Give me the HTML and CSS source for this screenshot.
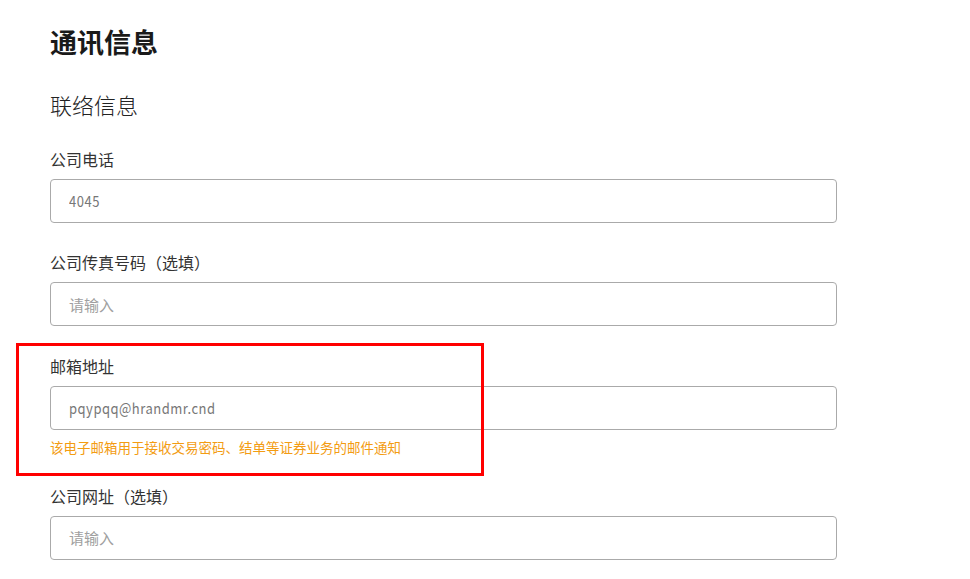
FILE: index.html
```html
<!DOCTYPE html>
<html lang="zh-CN">
<head>
<meta charset="utf-8">
<title>通讯信息</title>
<link rel="stylesheet" href="styles.css">
</head>
<body>
<main class="page">
  <h1 class="title">通讯信息</h1>
  <h2 class="subtitle">联络信息</h2>
  <div class="field">
    <label class="label">公司电话</label>
    <div class="input"><span class="value">4045</span></div>
  </div>
  <div class="field">
    <label class="label">公司传真号码（选填）</label>
    <div class="input"><span class="placeholder">请输入</span></div>
  </div>
  <div class="field">
    <label class="label">邮箱地址</label>
    <div class="input"><span class="value">pqypqq@hrandmr.cnd</span></div>
    <p class="hint">该电子邮箱用于接收交易密码、结单等证券业务的邮件通知</p>
  </div>
  <div class="field">
    <label class="label">公司网址（选填）</label>
    <div class="input"><span class="placeholder">请输入</span></div>
  </div>
  <div class="highlight"></div>
</main>
</body>
</html>
```

FILE: styles.css
```css
* { box-sizing: border-box; }
html, body { margin: 0; padding: 0; background: #fff; }
body {
  font-family: "Microsoft YaHei", "Noto Sans CJK SC", "Noto Sans", sans-serif;
  color: #333;
}
.page {
  position: relative;
  padding: 24px 0 0 50px;
  width: 970px;
  height: 579px;
  overflow: hidden;
}
.title {
  margin: 0;
  font-size: 27px;
  line-height: 36px;
  font-weight: 700;
  color: #1a1a1a;
}
.subtitle {
  margin: 29px 0 0;
  font-size: 22px;
  line-height: 30px;
  font-weight: 300;
  color: #222;
}
.field {
  margin-top: 27.5px;
  display: flex;
  flex-direction: column;
}
.label {
  font-size: 16px;
  line-height: 24px;
  font-weight: 400;
  color: #333;
}
.input {
  margin-top: 8px;
  width: 787px;
  height: 44px;
  border: 1px solid #aaaaaa;
  border-radius: 4px;
  padding: 0 18px;
  display: flex;
  align-items: center;
  font-size: 15px;
}
.placeholder { color: #a0a0a0; }
.value {
  color: #777;
  font-size: 13px;
  letter-spacing: 0.5px;
  transform: scaleY(1.15);
}
.hint {
  margin: 8.5px 0 0;
  font-size: 13.5px;
  line-height: 18px;
  color: #f39c12;
}
.highlight {
  position: absolute;
  left: 16px;
  top: 343px;
  width: 468px;
  height: 133px;
  border: 3px solid #ff0000;
}
```
